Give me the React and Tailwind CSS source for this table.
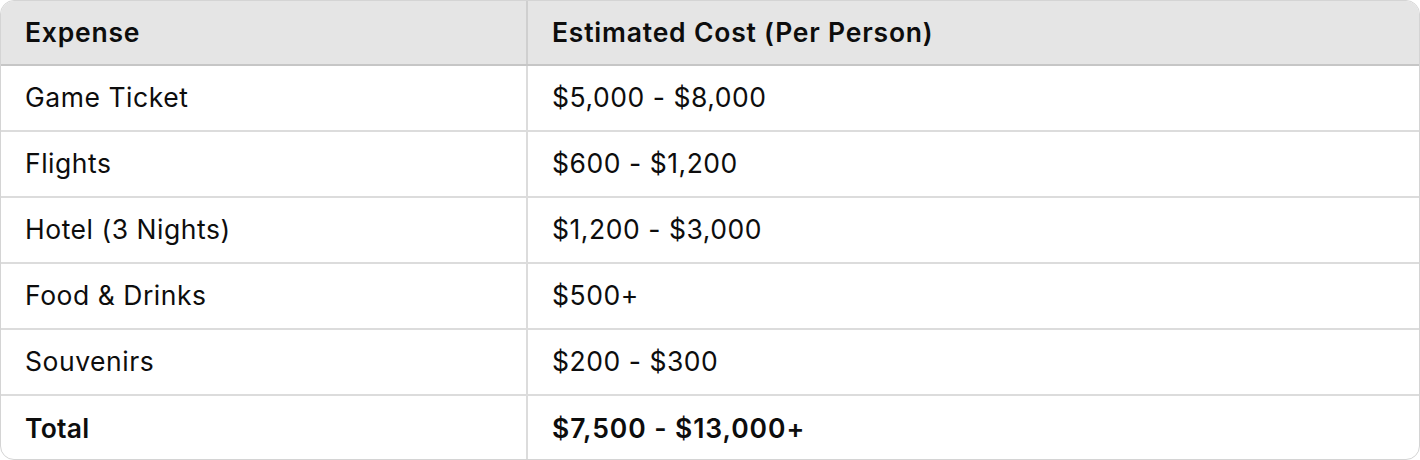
import React from "react";

const rows = [
  ["Game Ticket", "$5,000 - $8,000"],
  ["Flights", "$600 - $1,200"],
  ["Hotel (3 Nights)", "$1,200 - $3,000"],
  ["Food & Drinks", "$500+"],
  ["Souvenirs", "$200 - $300"],
];

const App = () => {
  return (
    <div className="w-[1420px] h-[460px] bg-white font-['Inter',sans-serif] text-[26.5px] text-[#0d0d0d] tracking-[0.02em]">
      <div className="h-full rounded-[14px] border border-[#d4d4d4] overflow-hidden">
        {/* Header */}
        <div className="grid grid-cols-[527px_1fr] h-[65px] bg-[#e5e5e5] border-b-2 border-[#c6c6c6] font-semibold tracking-[0.03em]">
          <div className="flex items-center pl-6 border-r-2 border-[#cfcfcf]">Expense</div>
          <div className="flex items-center pl-6">Estimated Cost (Per Person)</div>
        </div>

        {/* Body rows */}
        {rows.map(([expense, cost]) => (
          <div
            key={expense}
            className="grid grid-cols-[527px_1fr] h-[66px] border-b-2 border-[#dcdcdc]"
          >
            <div className="flex items-center pl-6 border-r-2 border-[#dcdcdc]">{expense}</div>
            <div className="flex items-center pl-6">{cost}</div>
          </div>
        ))}

        {/* Total */}
        <div className="grid grid-cols-[527px_1fr] h-[66px] font-semibold">
          <div className="flex items-center pl-6 border-r-2 border-[#dcdcdc] tracking-[0.01em]">Total</div>
          <div className="flex items-center pl-6 tracking-[0.035em]">$7,500 - $13,000+</div>
        </div>
      </div>
    </div>
  );
};

export default App;
